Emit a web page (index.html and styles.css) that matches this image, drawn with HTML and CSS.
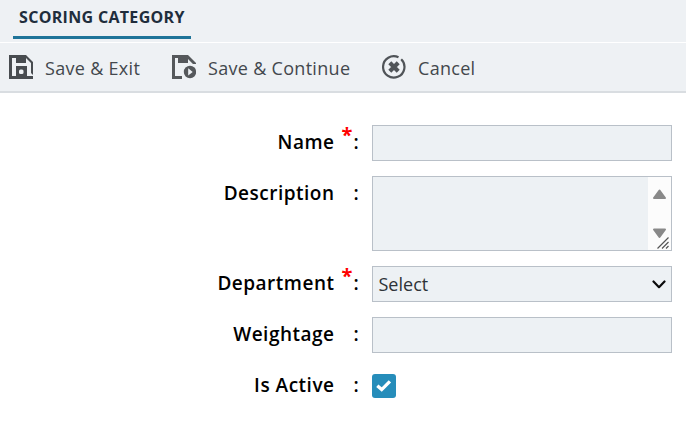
FILE: index.html
```html
<!DOCTYPE html>
<html lang="en">
<head>
<meta charset="utf-8">
<title>Scoring Category</title>
<link rel="stylesheet" href="styles.css">
</head>
<body>
<header class="tabs"><h1 class="tab">SCORING CATEGORY</h1></header>
<nav class="toolbar">
  <button class="action save-exit">
    <svg class="icon" viewBox="0 0 24 24"><path fill="#484c50" d="M0 0H17L24 7V20L22 18V8L17 3V8H7V3H3V21H7V11H18V21H24V24H0Z"/><path fill="#484c50" d="M7 11H18V24H7Z"/><rect x="10" y="14.500" width="4.500" height="4.500" rx="1.500" fill="#eef1f4"/></svg>
    <span>Save &amp; Exit</span>
  </button>
  <button class="action save-continue">
    <svg class="icon" viewBox="0 0 24 24"><path fill="#55585b" d="M0 0H16L24 8V9H21L16 4V8H6V3H3V21H10V24H0Z"/><circle cx="18" cy="17" r="6.2" fill="#55585b"/><path d="M16.2 13.3V20.5L20.7 17Z" fill="#eef1f4"/></svg>
    <span>Save &amp; Continue</span>
  </button>
  <button class="action cancel">
    <svg class="icon" viewBox="0 0 24 24"><path d="M19.2 4.200A10.7 10.7 0 1 1 16.500 2.300" fill="none" stroke="#505458" stroke-width="2.2"/><path d="M7.800 7.800L16.200 16.200M16.200 7.800L7.800 16.200" stroke="#505458" stroke-width="4.2"/></svg>
    <span>Cancel</span>
  </button>
</nav>
<main class="form">
  <div class="row"><label class="label" for="name">Name</label><span class="mark"><b class="required">*</b>:</span><input class="field" id="name"></div>
  <div class="row tall"><label class="label">Description</label><span class="mark">:</span>
    <div class="field area"><div class="scrollbar">
      <svg width="23" height="73" viewBox="0 0 23 73"><g fill="#898989" stroke="#898989" stroke-width="2" stroke-linejoin="round"><path d="M6 21L11.500 13.500L17 21Z"/><path d="M6 52.500H17L11.500 60Z"/></g><path d="M9.500 71.500L20.500 60.500M14 71.500L20.500 65M18 71.500L20.500 69" stroke="#555" stroke-width="1.200"/></svg>
    </div></div>
  </div>
  <div class="row"><label class="label">Department</label><span class="mark"><b class="required">*</b>:</span>
    <div class="field select"><span>Select</span><svg width="14" height="10" viewBox="0 0 14 10"><path d="M1.500 2.500L7 8.200L12.500 2.500" fill="none" stroke="#0a0a0a" stroke-width="2.200" stroke-linecap="round" stroke-linejoin="round"/></svg></div>
  </div>
  <div class="row"><label class="label" for="weight">Weightage</label><span class="mark">:</span><input class="field" id="weight"></div>
  <div class="row"><span class="label">Is Active</span><span class="mark">:</span>
    <span class="checkbox"><svg width="24" height="24" viewBox="0 0 24 24"><path d="M5.300 11.700L9.700 15.600L17.900 7.300" fill="none" stroke="#fff" stroke-width="3.300"/></svg></span>
  </div>
</main>
</body>
</html>
```
FILE: styles.css
```css
* { box-sizing: border-box; }
body { margin: 0; height: 424px; overflow: hidden; background: #fff; font-family: "Open Sans", sans-serif; }
svg { display: block; flex: none; }
.tabs { height: 43px; padding-left: 13px; background: #eef1f4; border-bottom: 1px solid #fff; }
.tab { width: 178px; height: 39px; margin: 0; padding: 5px 0 0 6px; border-bottom: 3px solid #1f7499; color: #202d3c; font-size: 16px; line-height: 24px; font-weight: 700; letter-spacing: 0.32px; white-space: nowrap; }
.toolbar { display: flex; height: 50px; padding-left: 9px; background: #eef1f4; border-bottom: 2px solid #d9dde1; }
.action { display: flex; align-items: center; gap: 12px; padding: 0; border: 0; background: none; color: #43484d; font: 400 18px/24px "Open Sans", sans-serif; letter-spacing: 0.3px; text-align: left; white-space: nowrap; }
.action span { padding-top: 1px; }
.icon { width: 24px; height: 24px; }
.save-exit { width: 163px; }
.save-continue { width: 210px; }
.form { display: flex; flex-direction: column; gap: 15px; padding-top: 32px; }
.row { display: grid; grid-template-columns: 334.5px 37.5px 300px; height: 36px; }
.tall { height: 75px; }
.label, .mark { color: #000; font-size: 19px; line-height: 34px; font-weight: 600; letter-spacing: 0.5px; }
.label { text-align: right; white-space: nowrap; }
.mark { position: relative; padding-left: 19px; }
.required { position: absolute; left: 7px; top: -5px; color: #f00; font-size: 20px; line-height: 30px; font-weight: 700; }
.field { width: 300px; height: 36px; margin: 0; padding: 0; border: 1px solid #b9c0c8; border-radius: 0; background: #edf1f4; outline: 0; }
.area { display: flex; justify-content: flex-end; height: 75px; }
.scrollbar { width: 23px; background: #fcfcfc; }
.select { display: flex; align-items: center; justify-content: space-between; padding: 0 5px 0 5.5px; color: #2e3338; font-size: 18px; line-height: 34px; }
.checkbox { width: 24px; height: 24px; margin-top: 6px; border-radius: 3px; background: #268dba; }
```
